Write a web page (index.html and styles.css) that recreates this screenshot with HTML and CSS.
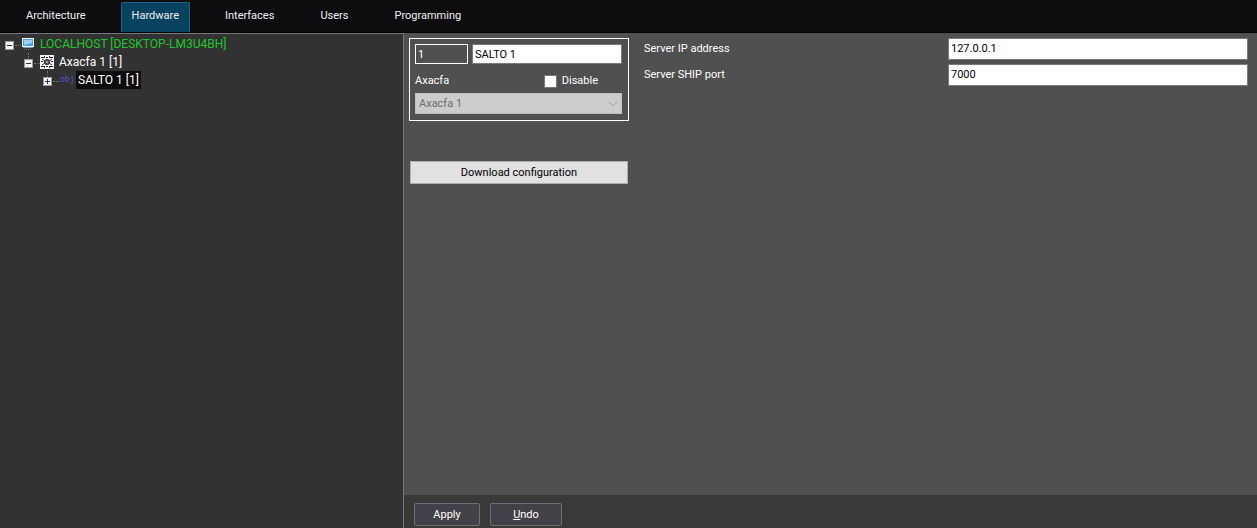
FILE: index.html
```html
<!DOCTYPE html>
<html lang="en">
<head>
  <meta charset="UTF-8">
  <title>Hardware</title>
  <link rel="stylesheet" href="styles.css">
</head>
<body>
  <nav class="topbar">
    <a href="#architecture" class="tab">Architecture</a>
    <a href="#hardware" class="tab active">Hardware</a>
    <a href="#interfaces" class="tab">Interfaces</a>
    <a href="#users" class="tab">Users</a>
    <a href="#programming" class="tab">Programming</a>
  </nav>

  <div class="workspace">
    <aside class="tree">
      <ul>
        <li>
          <div class="node host">
            <button type="button" class="toggle" aria-label="Collapse">
              <svg width="9" height="9" viewBox="0 0 9 9"><rect x=".5" y=".5" width="8" height="8" fill="#f4f4f4" stroke="#999"/><path d="M2 4.5h5" stroke="#2c3560"/></svg>
            </button>
            <span class="dots"></span>
            <svg class="icon" width="14" height="14" viewBox="0 0 14 14">
              <rect x="1" y="1" width="12" height="9" fill="#f2f8fc"/>
              <rect x="2" y="2" width="10" height="7" fill="#4d9fdc"/>
              <path d="M3 3h8v3L3 8z" fill="#9dd0f4"/>
              <path d="M2 10.500h10" stroke="#7e9db5"/>
              <path d="M3 12.500h8" stroke="#5c656c" stroke-dasharray="1 1"/>
            </svg>
            <a href="#localhost">LOCALHOST [DESKTOP-LM3U4BH]</a>
          </div>
          <ul>
            <li>
              <div class="node">
                <button type="button" class="toggle" aria-label="Collapse">
                  <svg width="9" height="9" viewBox="0 0 9 9"><rect x=".5" y=".5" width="8" height="8" fill="#f4f4f4" stroke="#999"/><path d="M2 4.5h5" stroke="#2c3560"/></svg>
                </button>
                <span class="dots"></span>
                <svg class="icon" width="14" height="14" viewBox="0 0 14 14">
                  <rect width="14" height="14" fill="#f2f2f2"/>
                  <path d="M1 2.500h3M10 2.500h3M1 11.500h3M10 11.500h3M6 2.500h2M6 11.500h2M1 6.500h2M11 6.500h2" stroke="#222"/>
                  <path d="M2 4l3 2M12 4l-3 2M2 10l3-2M12 10l-3-2M4.500 1v2M9.500 1v2M4.500 11v2M9.500 11v2" stroke="#333"/>
                  <circle cx="7" cy="7" r="3" fill="#333"/>
                  <circle cx="7" cy="7" r="1.500" fill="#999"/>
                </svg>
                <a href="#axacfa">Axacfa 1 [1]</a>
              </div>
              <ul>
                <li>
                  <div class="node selected">
                    <button type="button" class="toggle" aria-label="Expand">
                      <svg width="9" height="9" viewBox="0 0 9 9"><rect x=".5" y=".5" width="8" height="8" fill="#f4f4f4" stroke="#999"/><path d="M2 4.500h5M4.500 2v5" stroke="#2c3560"/></svg>
                    </button>
                    <span class="dots"></span>
                    <span class="obj">obj</span>
                    <a href="#salto">SALTO 1 [1]</a>
                  </div>
                </li>
              </ul>
            </li>
          </ul>
        </li>
      </ul>
    </aside>

    <form class="detail">
      <div class="panel">
        <div class="left">
          <div class="identity">
            <div class="row">
              <input type="text" class="number" value="1" aria-label="Number" readonly>
              <input type="text" class="name" value="SALTO 1" aria-label="Name">
            </div>
            <div class="row between">
              <label for="parent">Axacfa</label>
              <label class="check"><input type="checkbox"> Disable</label>
            </div>
            <div class="select">
              <select id="parent" disabled>
                <option>Axacfa 1</option>
              </select>
              <svg width="10" height="6" viewBox="0 0 10 6"><path d="M1 1l4 4 4-4" fill="none" stroke="#a0a0a0"/></svg>
            </div>
          </div>
          <button type="button" class="download">Download configuration</button>
        </div>

        <div class="settings">
          <label for="ip">Server IP address</label>
          <input type="text" id="ip" value="127.0.0.1">
          <label for="port">Server SHIP port</label>
          <input type="text" id="port" value="7000">
        </div>
      </div>

      <div class="actions">
        <button type="button" class="apply">Apply</button>
        <button type="button" class="undo"><u>U</u>ndo</button>
      </div>
    </form>
  </div>
</body>
</html>
```
FILE: styles.css
```css
* {
  box-sizing: border-box;
}

body {
  margin: 0;
  min-height: 100vh;
  display: flex;
  flex-direction: column;
  font-family: Roboto, "Liberation Sans", sans-serif;
  font-size: 11px;
  line-height: 14px;
  color: #fff;
  background: #323232;
}

input, select, button {
  font: inherit;
  margin: 0;
  border-radius: 0;
}

.topbar {
  display: flex;
  gap: 24px;
  height: 33px;
  padding: 2px 15px 0;
  background: #0d0d0f;
  border-bottom: 1px solid #000;
}

.tab {
  padding: 6px 10px;
  border: 1px solid transparent;
  border-bottom: 0;
  border-radius: 2px 2px 0 0;
  color: #f0f0f0;
  text-decoration: none;
}

.tab.active {
  background: #07425f;
  border-color: #1d6285;
}

.workspace {
  flex: 1;
  display: grid;
  grid-template-columns: 404px 1fr;
}

/* tree */
.tree {
  padding: 1px 4px;
  background: #323232;
  border-top: 1px solid #77797c;
  border-right: 1px solid #77797c;
  font-size: 12px;
}

.tree ul {
  margin: 0;
  padding: 0;
  list-style: none;
}

.tree ul ul {
  padding-left: 19px;
}

.node {
  display: flex;
  align-items: center;
  height: 18px;
}

.toggle {
  position: relative;
  display: flex;
  padding: 2px 0 0 1px;
  border: 0;
  background: none;
}

/* dotted line up to the parent */
.tree ul ul .toggle::before {
  content: "";
  position: absolute;
  left: 5px;
  top: -4px;
  height: 6px;
  border-left: 1px dotted #777;
}

.dots {
  width: 6px;
  margin: 2px 1px 0;
  border-top: 1px dotted #777;
}

.icon, .obj {
  width: 14px;
  margin-right: 2px;
}

.node .icon {
  margin-left: -1px;
  margin-right: 3px;
}

.obj {
  font-family: "DejaVu Sans Mono", monospace;
  font-size: 8px;
  color: #5454c8;
}

.node a {
  padding: 0 2px;
  line-height: 18px;
  color: #fff;
  text-decoration: none;
}

.host a {
  color: #1fc72a;
}

.selected a {
  background: #0c0c0c;
}

/* detail */
.detail {
  display: flex;
  flex-direction: column;
}

.panel {
  flex: 1;
  display: flex;
  align-items: flex-start;
  gap: 15px;
  padding: 5px 9px 5px 5px;
  background: #505050;
}

.left {
  width: 220px;
}

.identity {
  display: flex;
  flex-direction: column;
  padding: 5px 6px 6px 5px;
  border: 1px solid #fff;
}

.row {
  display: flex;
  gap: 4px;
}

.between {
  justify-content: space-between;
  align-items: center;
  height: 29px;
  padding: 5px 24px 0 0;
}

input[type="text"] {
  height: 22px;
  padding: 0 2px 2px;
  border: 1px solid #7a7a7a;
  background: #fff;
  color: #000;
}

.row input.number {
  width: 53px;
  height: 20px;
  padding-bottom: 0;
  border-color: #fff;
  background: #505050;
  color: #fff;
}

.row input.name {
  flex: 1;
  min-width: 0;
  height: 20px;
  padding-bottom: 0;
}

.check {
  display: flex;
  align-items: center;
  gap: 5px;
}

.check input {
  appearance: none;
  width: 13px;
  height: 13px;
  background: #fff;
  border: 1px solid #777;
}

.check input:checked {
  background: #07425f;
}

.select {
  display: flex;
  align-items: center;
}

.select select {
  width: 100%;
  height: 21px;
  padding: 0 3px;
  appearance: none;
  border: 1px solid #bfbfbf;
  background: #ccc;
  color: #6d6d6d;
  opacity: 1;
}

.select svg {
  margin-left: -14px;
}

.download {
  width: 218px;
  height: 23px;
  margin: 40px 1px 0;
  padding: 0;
  border: 1px solid #adadad;
  background: #e1e1e1;
  color: #000;
}

.settings {
  flex: 1;
  display: grid;
  grid-template-columns: 1fr 300px;
  gap: 4px;
  align-items: center;
}

.actions {
  display: flex;
  gap: 10px;
  padding: 8px 10px 2px;
  background: #3b3838;
}

.actions button {
  height: 23px;
  padding: 0;
  border: 1px solid #6e6e72;
  border-radius: 2px;
  background: #424147;
  color: #fff;
}

.actions .apply {
  width: 66px;
}

.actions .undo {
  width: 72px;
}
```
